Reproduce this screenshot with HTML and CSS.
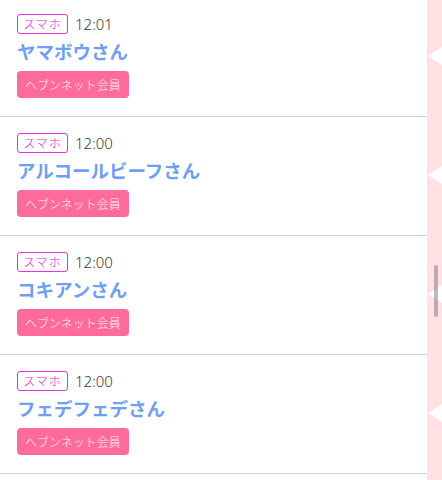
FILE: index.html
```html
<!DOCTYPE html>
<html lang="ja">
<head>
<meta charset="utf-8">
<link rel="stylesheet" href="styles.css">
</head>
<body>
<div class="page">
  <ul class="list">
    <li class="item">
      <div class="meta"><span class="badge">スマホ</span><span class="time">12:01</span></div>
      <div class="name">ヤマボウさん</div>
      <span class="member">ヘブンネット会員</span>
    </li>
    <li class="item">
      <div class="meta"><span class="badge">スマホ</span><span class="time">12:00</span></div>
      <div class="name">アルコールビーフさん</div>
      <span class="member">ヘブンネット会員</span>
    </li>
    <li class="item">
      <div class="meta"><span class="badge">スマホ</span><span class="time">12:00</span></div>
      <div class="name">コキアンさん</div>
      <span class="member">ヘブンネット会員</span>
    </li>
    <li class="item">
      <div class="meta"><span class="badge">スマホ</span><span class="time">12:00</span></div>
      <div class="name">フェデフェデさん</div>
      <span class="member">ヘブンネット会員</span>
    </li>
  </ul>
  <div class="side">
    <span class="notch n1"></span>
    <span class="notch n2"></span>
    <span class="notch n3"></span>
    <span class="notch n4"></span>
    <span class="scrollbar"></span>
  </div>
</div>
</body>
</html>
```
FILE: styles.css
```css
html, body {
  margin: 0;
  padding: 0;
  background: #fff;
  overflow: hidden;
}
body {
  font-family: "Noto Sans CJK JP", "Noto Sans", sans-serif;
  width: 442px;
  height: 480px;
}
.page {
  display: flex;
  height: 480px;
  overflow: hidden;
}
.list {
  list-style: none;
  margin: -2px 0 0 0;
  padding: 0;
  width: 427px;
  flex: none;
}
.item {
  padding: 16px 17px 17px;
  border-bottom: 1px solid #cfcfcf;
  height: 85px;
}
.meta {
  display: flex;
  align-items: center;
  height: 20px;
}
.badge {
  box-sizing: border-box;
  height: 20px;
  width: 51px;
  border: 1px solid #e62ee6;
  border-radius: 3px;
  color: #e020d8;
  font-size: 12px;
  font-weight: 300;
  letter-spacing: 1px;
  line-height: 18px;
  text-align: center;
}
.time {
  margin-left: 7px;
  font-family: "Noto Sans", "Noto Sans CJK JP", sans-serif;
  font-size: 15px;
  font-weight: 300;
  color: #3a3a3a;
  line-height: 20px;
}
.name {
  margin-top: 3px;
  font-size: 18.5px;
  line-height: 29px;
  font-weight: bold;
  color: #6e9ff2;
}
.member {
  display: inline-block;
  margin-top: 5px;
  width: 112px;
  height: 27px;
  background: #ff6b9a;
  border-radius: 4px;
  color: #fff2f6;
  font-size: 12px;
  font-weight: 300;
  line-height: 27px;
  text-align: center;
}
.side {
  position: relative;
  flex: 1;
  background: #ffe1e3;
}
.notch {
  position: absolute;
  right: 0;
  width: 0;
  height: 0;
  border-top: 9px solid transparent;
  border-bottom: 9px solid transparent;
  border-right: 14px solid #fff;
}
.n1 { top: 47px; }
.n2 { top: 166px; }
.n3 { top: 285px; }
.n4 { top: 404px; }
.scrollbar {
  position: absolute;
  left: 7px;
  top: 265px;
  width: 4px;
  height: 52px;
  border-radius: 2px;
  background: rgba(120, 120, 120, 0.5);
}
```
